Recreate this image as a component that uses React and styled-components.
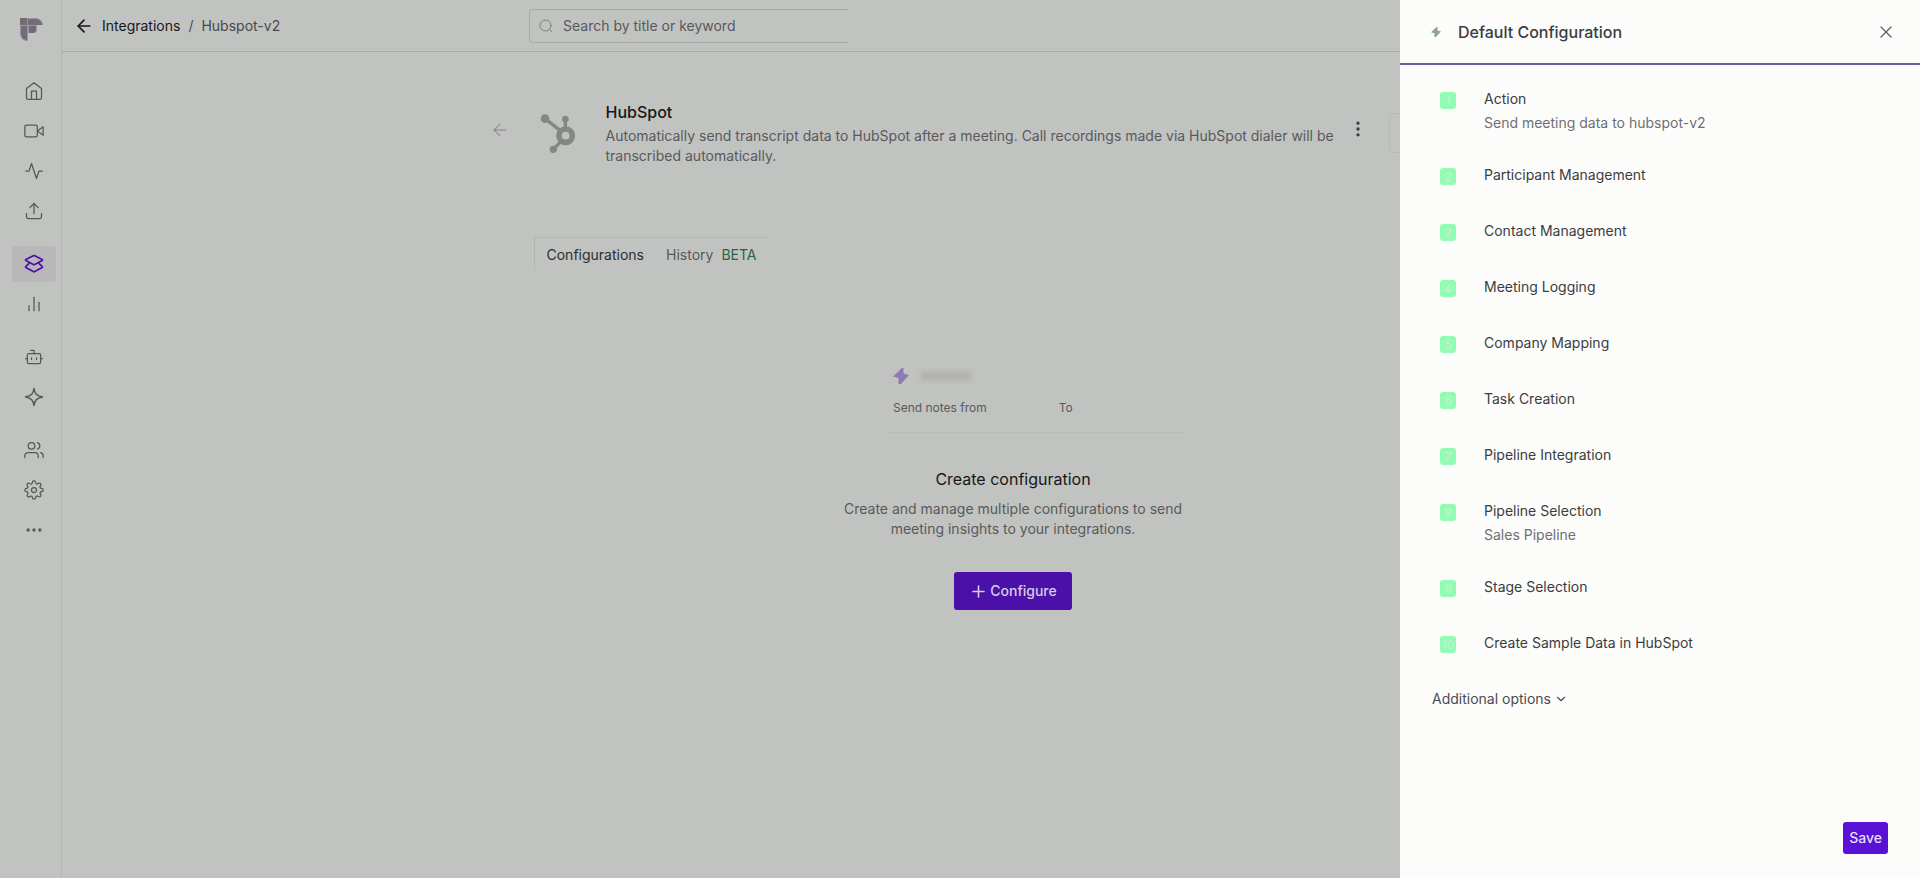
import React from 'react';
import styled, { createGlobalStyle } from 'styled-components';
import {
  FiActivity,
  FiArrowLeft,
  FiBarChart2,
  FiChevronDown,
  FiHome,
  FiMoreHorizontal,
  FiMoreVertical,
  FiPlus,
  FiSettings,
  FiUpload,
  FiUsers,
  FiVideo,
  FiX,
} from 'react-icons/fi';
import { Bot } from 'lucide-react';

const color = {
  page: '#c1c3c0',
  border: '#a9aba9',
  faint: '#b3b5b2',
  ink: '#17171a',
  text: '#3b3c40',
  muted: '#58595d',
  icon: '#565856',
  purple: '#4b10a8',
  green: '#92fcb4',
  panel: '#fcfdfb',
};

const GlobalStyle = createGlobalStyle`
  * {
    box-sizing: border-box;
  }
  body {
    margin: 0;
    background: ${color.page};
    color: ${color.text};
    font-family: Inter, 'Liberation Sans', sans-serif;
    font-size: 14px;
    line-height: 20px;
  }
  h1, h2, h3, p, ul, ol {
    margin: 0;
    padding: 0;
  }
  ul, ol {
    list-style: none;
  }
  button, input {
    font: inherit;
    color: inherit;
  }
  button {
    padding: 0;
    border: 0;
    background: none;
    cursor: pointer;
  }
  a {
    color: inherit;
    text-decoration: none;
  }
  svg {
    display: block;
    flex: none;
  }
`;

const Layout = styled.div`
  display: flex;
  min-height: 100vh;
`;

const Sidebar = styled.nav`
  flex: none;
  display: flex;
  flex-direction: column;
  align-items: center;
  width: 61px;
  padding: 18px 5px 0 12px;
`;

const LogoLink = styled.a`
  align-self: flex-start;
  margin: 0 0 32px 8px;
`;

const NavGroup = styled.ul`
  display: flex;
  flex-direction: column;
  gap: 4px;
  margin-bottom: 17px;
`;

const NavLink = styled.a`
  display: flex;
  align-items: center;
  justify-content: center;
  width: 44px;
  height: 36px;
  border-radius: 4px;
  color: ${(props) => (props.$active ? color.purple : color.icon)};
  background: ${(props) => (props.$active ? '#b9b7ba' : 'transparent')};
`;

const Main = styled.div`
  flex: 1;
  min-width: 0;
  border-left: 1px solid ${color.faint};
`;

const TopBar = styled.header`
  display: grid;
  grid-template-columns: 1fr minmax(0, 924px) 1fr;
  align-items: center;
  height: 52px;
  border-bottom: 1px solid ${color.border};
`;

const Breadcrumbs = styled.div`
  display: flex;
  align-items: center;
  gap: 8px;
  padding-left: 12px;
  color: #48494c;
  white-space: nowrap;

  a {
    display: flex;
    align-items: center;
    gap: 8px;
    color: ${color.ink};
  }
`;

const SearchBox = styled.label`
  display: flex;
  align-items: center;
  gap: 10px;
  width: 320px;
  height: 34px;
  padding-left: 9px;
  border: 1px solid ${color.border};
  border-right: 0;
  border-radius: 4px 0 0 4px;
  color: #7b7d7b;

  input {
    flex: 1;
    min-width: 0;
    padding: 0;
    border: 0;
    outline: 0;
    background: none;
  }
  input::placeholder {
    color: ${color.muted};
    opacity: 1;
  }
`;

const Content = styled.main`
  display: flex;
  align-items: flex-start;
  max-width: 1003px;
  margin: 0 auto;
  padding-top: 48px;
`;

const BackLink = styled.a`
  margin: 20px 24px 0 0;
  color: #8e908e;
`;

const Integration = styled.div`
  flex: 1;
  min-width: 0;
`;

const IntegrationHeader = styled.div`
  display: flex;
  align-items: flex-start;
  margin-bottom: 71px;
`;

const IntegrationLogo = styled.div`
  padding: 14px 30px 0 6px;
`;

const IntegrationInfo = styled.div`
  width: 740px;
  color: ${color.muted};
`;

const Title = styled.h1`
  font-size: 16px;
  line-height: 24px;
  font-weight: 500;
  color: ${color.ink};
  margin-bottom: 2px;
`;

const MenuButton = styled.button`
  margin: 19px 21px 0 2px;
  color: ${color.text};
`;

const StatusButton = styled.button`
  flex: 1;
  height: 40px;
  margin-top: 13px;
  border: 1px solid #b9bab8;
  border-radius: 4px;
`;

const Tabs = styled.div`
  display: inline-flex;
  align-items: center;
  gap: 22px;
  height: 34px;
  padding: 0 12px;
  border: 1px solid ${color.faint};
  border-width: 1px 0 0 1px;
  border-radius: 4px 0 0 4px;
`;

const Tab = styled.button`
  display: flex;
  gap: 8px;
  color: ${(props) => (props.$active ? '#2c2d30' : color.muted)};
`;

const Beta = styled.span`
  color: #2b6344;
`;

const EmptyState = styled.section`
  display: flex;
  flex-direction: column;
  align-items: center;
  padding-top: 95px;
  text-align: center;
  color: ${color.muted};
`;

const PreviewCard = styled.div`
  width: 300px;
  height: 67px;
  padding-left: 8px;
  margin: 0 0 34px 44px;
  border-bottom: 1px solid #bbbdba;
  font-size: 12px;
  line-height: 16px;
`;

const PreviewName = styled.div`
  display: flex;
  align-items: center;
  gap: 12px;
  height: 20px;
  margin-bottom: 14px;
`;

const PreviewBar = styled.span`
  width: 50px;
  height: 10px;
  background: #b1b1ae;
  filter: blur(2px);
`;

const PreviewRoute = styled.div`
  display: flex;
  gap: 72px;
`;

const EmptyTitle = styled.h2`
  margin-bottom: 8px;
  font-size: 16px;
  line-height: 24px;
  font-weight: 400;
  color: ${color.ink};
`;

const EmptyText = styled.p`
  max-width: 360px;
  margin-bottom: 33px;
`;

const ConfigureButton = styled.button`
  display: flex;
  align-items: center;
  gap: 2px;
  height: 38px;
  padding: 0 15px;
  border-radius: 3px;
  background: ${color.purple};
  color: #d6cde6;
  font-weight: 500;
`;

const Drawer = styled.aside`
  position: fixed;
  top: 0;
  right: 0;
  bottom: 0;
  display: flex;
  flex-direction: column;
  width: 520px;
  background: ${color.panel};
`;

const DrawerHeader = styled.header`
  display: flex;
  align-items: center;
  height: 65px;
  padding: 0 24px 0 31px;
  border-bottom: 2px solid #6c5a9c;

  h2 {
    flex: 1;
    margin-left: 17px;
    font-size: 16px;
    line-height: 24px;
    font-weight: 500;
  }
`;

const CloseButton = styled.button`
  color: #5c5d60;
`;

const DrawerBody = styled.div`
  flex: 1;
  min-height: 0;
  overflow-y: auto;
  padding: 24px 32px 0;
`;

const Steps = styled.ol`
  display: flex;
  flex-direction: column;
  gap: 32px;
  margin-bottom: 32px;
`;

const Step = styled.li`
  display: flex;
  gap: 28px;
  min-height: 24px;
  padding-left: 8px;
`;

const StepNumber = styled.span`
  display: flex;
  align-items: center;
  justify-content: center;
  width: 16px;
  height: 17px;
  margin-top: 3px;
  border-radius: 3px;
  background: ${color.green};
  color: #c8f0d2;
  font-size: 12px;
`;

const StepText = styled.div`
  display: flex;
  flex-direction: column;
  gap: 4px;

  h3 {
    font-size: 14px;
    line-height: 20px;
    font-weight: 400;
  }
  p {
    color: #6e6f73;
  }
`;

const OptionsButton = styled.button`
  display: flex;
  align-items: center;
  gap: 3px;
  color: #4b4c50;
`;

const DrawerFooter = styled.footer`
  display: flex;
  justify-content: flex-end;
  padding: 0 32px 24px;
`;

const SaveButton = styled.button`
  height: 32px;
  padding: 0 6px;
  border-radius: 3px;
  background: #5911d6;
  color: #e6dcf8;
  font-weight: 500;
`;

const Logo = () => (
  <svg width='23' height='23' viewBox='0 0 23 23'>
    <path
      d='M0 0h16a7 7 0 0 1 7 7h-6v4a4 4 0 0 1-4 4H8v8a7 7 0 0 1-8-7z'
      fill='#9a8fb4'
    />
    <g fill='#716d70'>
      <path d='M0 0h7v7H0z' />
      <path d='M8 1h8a6 6 0 0 1 6 6H8z' />
      <path d='M9 8h7v4a3 3 0 0 1-3 3H9z' />
      <path d='M1 8h6v14a6 6 0 0 1-6-6z' />
    </g>
  </svg>
);

const HubspotLogo = () => (
  <svg
    width='36'
    height='40'
    viewBox='0 0 108 120'
    fill='#858784'
    stroke='#858784'
    strokeWidth='10'
  >
    <circle cx='15' cy='14' r='13' stroke='none' />
    <circle cx='76' cy='15' r='10' stroke='none' />
    <circle cx='40' cy='106' r='11' stroke='none' />
    <path d='M15 14l46 36M76 15v32M40 106l23-24' />
    <circle cx='77' cy='65' r='20' fill='none' strokeWidth='17' />
  </svg>
);

const LayersIcon = () => (
  <svg
    width='20'
    height='20'
    viewBox='0 0 20 20'
    fill='none'
    stroke='currentColor'
    strokeWidth='1.7'
    strokeLinejoin='round'
  >
    <path d='M9.3 1.7 1.8 5.5a.6.6 0 0 0 0 1l7.5 4a1.5 1.5 0 0 0 1.4 0l7.5-4a.6.6 0 0 0 0-1l-7.5-3.8a1.5 1.5 0 0 0-1.4 0z' />
    <path d='M5.500 9.200 1.800 12.400a.6.6 0 0 0 0 1l7.500 4.200a1.500 1.500 0 0 0 1.400 0l7.500-4.200a.6.6 0 0 0 0-1l-3.700-3.200' />
  </svg>
);

const SparkIcon = () => (
  <svg
    width='20'
    height='20'
    viewBox='0 0 20 20'
    fill='none'
    stroke='currentColor'
    strokeWidth='1.5'
    strokeLinejoin='round'
  >
    <path d='M10 1.5c.8 5.2 2.5 7.2 8.5 8.5-6 1.3-7.7 3.3-8.5 8.5-.8-5.2-2.5-7.2-8.5-8.5 6-1.3 7.7-3.3 8.5-8.500z' />
  </svg>
);

const SearchIcon = () => (
  <svg
    width='14'
    height='14'
    viewBox='0 0 14 14'
    fill='none'
    stroke='currentColor'
    strokeLinecap='round'
  >
    <circle cx='6.5' cy='6.5' r='5.5' />
    <path d='m10.8 10.8 2 2' />
  </svg>
);

const BoltIcon = ({ size, fill }) => (
  <svg width={size} height={size} viewBox='0 0 16 16' fill={fill}>
    <path d='M9 0 0 8.5 5.5 10v6H8l8-9-5.500-1.500V0z' />
  </svg>
);

const navGroups = [
  [
    { label: 'Home', icon: <FiHome size={20} strokeWidth={1.5} /> },
    { label: 'Meetings', icon: <FiVideo size={20} strokeWidth={1.5} /> },
    { label: 'Activity', icon: <FiActivity size={20} strokeWidth={1.5} /> },
    { label: 'Uploads', icon: <FiUpload size={20} strokeWidth={1.5} /> },
  ],
  [
    { label: 'Integrations', icon: <LayersIcon />, active: true },
    { label: 'Analytics', icon: <FiBarChart2 size={20} strokeWidth={1.5} /> },
  ],
  [
    { label: 'Bots', icon: <Bot size={20} strokeWidth={1.5} /> },
    { label: 'AI apps', icon: <SparkIcon /> },
  ],
  [
    { label: 'Team', icon: <FiUsers size={20} strokeWidth={1.5} /> },
    { label: 'Settings', icon: <FiSettings size={20} strokeWidth={1.5} /> },
    { label: 'More', icon: <FiMoreHorizontal size={20} /> },
  ],
];

const steps = [
  { title: 'Action', detail: 'Send meeting data to hubspot-v2' },
  { title: 'Participant Management' },
  { title: 'Contact Management' },
  { title: 'Meeting Logging' },
  { title: 'Company Mapping' },
  { title: 'Task Creation' },
  { title: 'Pipeline Integration' },
  { title: 'Pipeline Selection', detail: 'Sales Pipeline' },
  { title: 'Stage Selection' },
  { title: 'Create Sample Data in HubSpot' },
];

const SideNav = () => (
  <Sidebar>
    <LogoLink href='#' aria-label='Dashboard'>
      <Logo />
    </LogoLink>
    {navGroups.map((group) => (
      <NavGroup key={group[0].label}>
        {group.map((item) => (
          <li key={item.label}>
            <NavLink href='#' aria-label={item.label} $active={item.active}>
              {item.icon}
            </NavLink>
          </li>
        ))}
      </NavGroup>
    ))}
  </Sidebar>
);

const Header = () => (
  <TopBar>
    <Breadcrumbs>
      <a href='#'>
        <FiArrowLeft size={20} />
        Integrations
      </a>
      <span>/</span>
      <span>Hubspot-v2</span>
    </Breadcrumbs>
    <SearchBox>
      <SearchIcon />
      <input
        type='text'
        aria-label='Search'
        placeholder='Search by title or keyword'
      />
    </SearchBox>
  </TopBar>
);

const ConfigurationDrawer = () => (
  <Drawer>
    <DrawerHeader>
      <BoltIcon size={10} fill='#8fa398' />
      <h2>Default Configuration</h2>
      <CloseButton aria-label='Close'>
        <FiX size={20} strokeWidth={1.5} />
      </CloseButton>
    </DrawerHeader>
    <DrawerBody>
      <Steps>
        {steps.map((step, index) => (
          <Step key={step.title}>
            <StepNumber>{index + 1}</StepNumber>
            <StepText>
              <h3>{step.title}</h3>
              {step.detail && <p>{step.detail}</p>}
            </StepText>
          </Step>
        ))}
      </Steps>
      <OptionsButton>
        Additional options
        <FiChevronDown size={14} />
      </OptionsButton>
    </DrawerBody>
    <DrawerFooter>
      <SaveButton>Save</SaveButton>
    </DrawerFooter>
  </Drawer>
);

const App = () => (
  <>
    <GlobalStyle />
    <Layout>
      <SideNav />
      <Main>
        <Header />
        <Content>
          <BackLink href='#' aria-label='Back'>
            <FiArrowLeft size={20} strokeWidth={1.5} />
          </BackLink>
          <Integration>
            <IntegrationHeader>
              <IntegrationLogo>
                <HubspotLogo />
              </IntegrationLogo>
              <IntegrationInfo>
                <Title>HubSpot</Title>
                <p>
                  Automatically send transcript data to HubSpot after a meeting.
                  Call recordings made via HubSpot dialer will be transcribed
                  automatically.
                </p>
              </IntegrationInfo>
              <MenuButton aria-label='More actions'>
                <FiMoreVertical size={20} />
              </MenuButton>
              <StatusButton aria-label='Connection status' />
            </IntegrationHeader>
            <Tabs>
              <Tab $active>Configurations</Tab>
              <Tab>
                History <Beta>BETA</Beta>
              </Tab>
            </Tabs>
            <EmptyState>
              <PreviewCard>
                <PreviewName>
                  <BoltIcon size={16} fill='#8e7cb0' />
                  <PreviewBar />
                </PreviewName>
                <PreviewRoute>
                  <span>Send notes from</span>
                  <span>To</span>
                </PreviewRoute>
              </PreviewCard>
              <EmptyTitle>Create configuration</EmptyTitle>
              <EmptyText>
                Create and manage multiple configurations to send meeting
                insights to your integrations.
              </EmptyText>
              <ConfigureButton>
                <FiPlus size={19} />
                Configure
              </ConfigureButton>
            </EmptyState>
          </Integration>
        </Content>
      </Main>
    </Layout>
    <ConfigurationDrawer />
  </>
);

export default App;
